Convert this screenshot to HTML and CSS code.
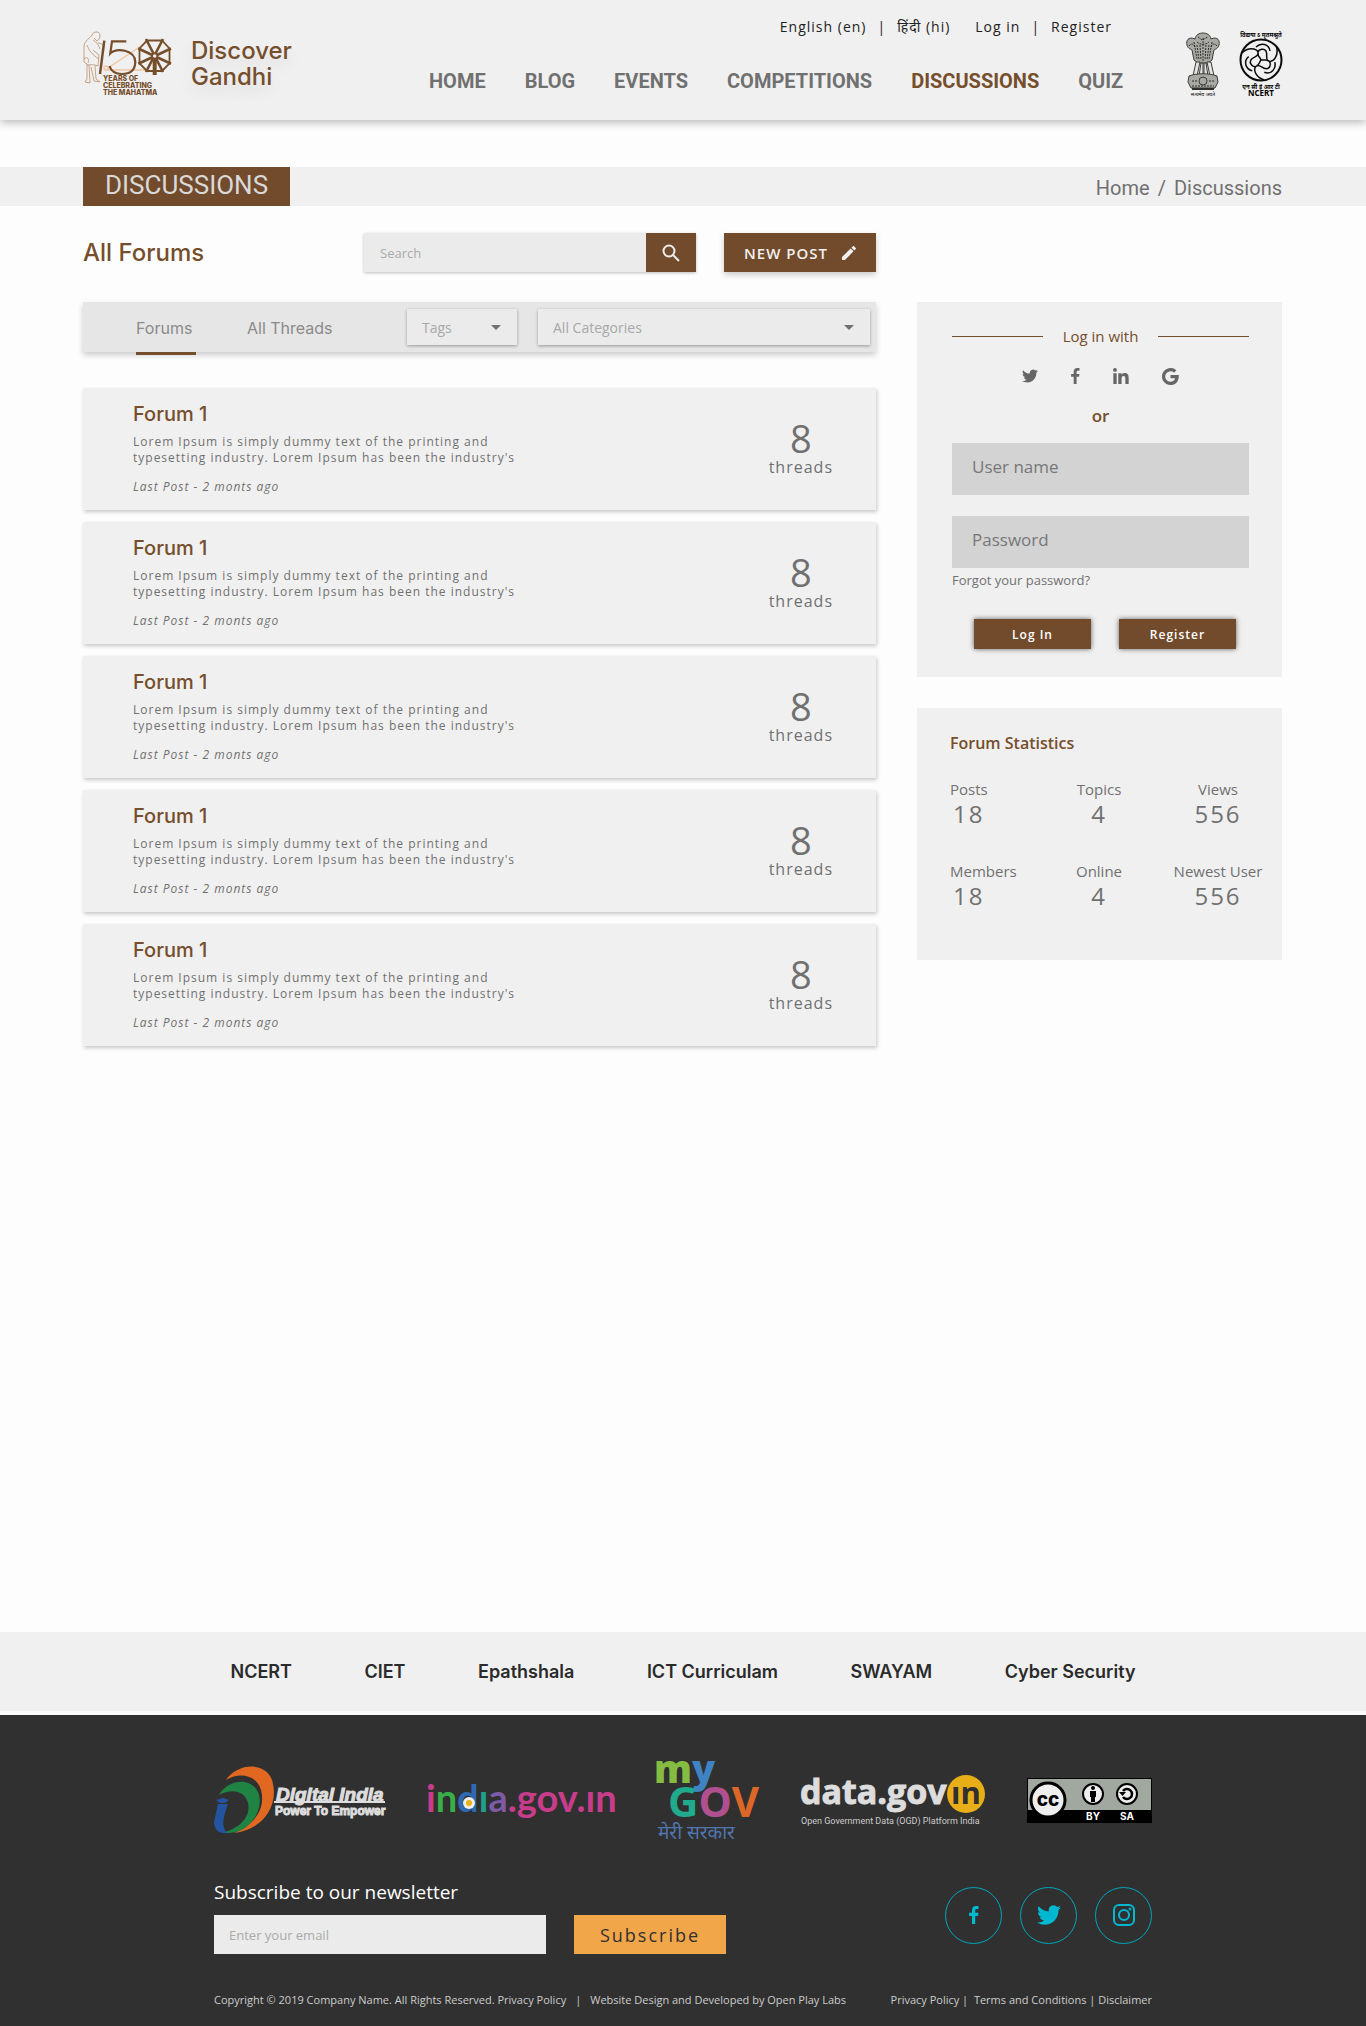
FILE: index.html
```html
<!DOCTYPE html>
<html lang="en">
<head>
<meta charset="utf-8">
<title>Discussions - Discover Gandhi</title>
<meta name="viewport" content="width=device-width, initial-scale=1">
<link rel="stylesheet" href="styles.css">
</head>
<body>
<svg class="sprite" aria-hidden="true">
  <symbol id="twitter" viewBox="0 0 24 24"><path d="M24 4.600a10 10 0 0 1-2.800.8 5 5 0 0 0 2.100-2.700 10 10 0 0 1-3.100 1.200 4.900 4.900 0 0 0-8.400 4.500A14 14 0 0 1 1.700 3.200a4.900 4.900 0 0 0 1.500 6.500 4.900 4.900 0 0 1-2.200-.6v.1a4.900 4.900 0 0 0 3.900 4.800 5 5 0 0 1-2.200.1 4.900 4.900 0 0 0 4.600 3.400A9.900 9.900 0 0 1 0 19.500a14 14 0 0 0 7.500 2.200c9.100 0 14-7.500 14-14v-.6A10 10 0 0 0 24 4.600z"/></symbol>
  <symbol id="facebook" viewBox="0 0 12 22"><path d="M11.500.2v3.500H9.400c-1.600 0-1.900.8-1.900 1.900v2.500h3.900l-.5 4H7.500V22h-4V12.100H0v-4h3.500v-3C3.500 1.800 5.500 0 8.500 0c1.400 0 2.600.1 3 .2z"/></symbol>
  <symbol id="linkedin" viewBox="0 0 24 24"><path d="M5.500 24H.5V8h5zM3 5.800A2.900 2.900 0 1 1 3 0a2.900 2.900 0 0 1 0 5.800zM23.500 24h-5v-7.800c0-1.900 0-4.200-2.600-4.200s-3 2-3 4.100V24h-5V8h4.800v2.200c.7-1.300 2.300-2.600 4.700-2.600 5.100 0 6.100 3.300 6.100 7.700z"/></symbol>
  <symbol id="google" viewBox="0 0 24 24"><path d="M12 10v4.400h6.500c-.7 3-3.200 5-6.500 5A7.400 7.400 0 1 1 17 6.600l3.300-3.300A12 12 0 1 0 12 24c7 0 12-4.900 11.700-14z"/></symbol>
</svg>

<header class="topbar">
  <div class="container topbar-row">
    <a class="brand" href="#">
      <svg class="brand-mark" viewBox="0 0 90 66" role="img" aria-label="150 years of celebrating the Mahatma">
        <g fill="none" stroke="#b98f6c" stroke-width=".8">
          <path d="M9 4c1-4 8-4 8 0 0 3-1 5-3 6l-3-3M9 4c-1 3-8 5-8 12v15l3 2v15l-2 3 5 1-1-18M10 9c4 2 6 6 7 9M4 14c2 5 4 9 12 14M15 12c3 0 5 2 6 4M10 19l6 5-1 11c-4-2-9-1-11-1M12 35l1 13 4 3-6-1-3-14M1 28c3-3 6 0 4 4"/>
        </g>
        <g fill="none" stroke="#f0c5a0" stroke-width="1.500"><path d="M25 37 64 11M24 39h40"/><circle cx="23" cy="37" r="2"/></g>
        <g fill="none" stroke="#754e2c">
          <path stroke-width="2.500" d="M21.300 9.700 17 43"/>
          <path stroke-width="2.200" d="M43.300 10.300H29L27.300 22.300C33 16 52 19 52.300 31 52 40 46 43 39 43 32 43 28 40 26.500 35"/>
          <path stroke-width="1.800" d="M64 9.500h15l7.500 8v15l-7.500 7.500H64l-7.500-7.500v-15z"/>
          <path stroke-width="2.600" d="M63 8 80 41M80 8 63 41M88 17.500 55.300 32.800M88 32.800 55.300 17.500"/>
          <path stroke-width="4" d="M71.700 28v16"/>
        </g>
        <circle cx="71.700" cy="25" r="2.500" fill="#f0f0f0" stroke="#754e2c" stroke-width="1.500"/>
        <g class="brand-caption"><text x="20" y="50">YEARS OF</text><text x="20" y="57">CELEBRATING</text><text x="20" y="64">THE MAHATMA</text></g>
      </svg>
      <span class="brand-name">Discover<br>Gandhi</span>
    </a>
    <div class="nav-col">
      <div class="utility"><a href="#">English (en)</a><span>|</span><a href="#">हिंदी (hi)</a><a class="login-link" href="#">Log in</a><span>|</span><a href="#">Register</a></div>
      <nav class="main-nav" aria-label="Main"><a href="#">HOME</a><a href="#">BLOG</a><a href="#">EVENTS</a><a href="#">COMPETITIONS</a><a class="current" href="#">DISCUSSIONS</a><a href="#">QUIZ</a></nav>
    </div>
    <div class="emblems">
      <svg width="36" height="64" viewBox="0 0 34 64" role="img" aria-label="National emblem of India">
        <g fill="#a8a8a5" stroke="#3a3a38" stroke-width="1">
          <path d="M9 6c1-8 15-8 16 0 7-3 9 2 8 6-1 4-4 4-5 5l-2 10-4 3H12l-4-3-2-10c-1-1-4-1-5-5C0 8 2 3 9 6z"/>
          <path fill="#e4e4e2" d="M10 29h4l-3 14H7zM15 30h2v13h-4zM18 30h2l2 13h-4zM21 29h4l3 14h-4z"/>
          <path d="M3 43c8-3 20-3 28 0l1 6-3 6H5l-3-6z"/><circle cx="17" cy="48" r="4"/>
        </g>
        <path fill="none" stroke="#2d2d2b" stroke-width="1" stroke-dasharray="2 1" d="M12 4l4 3 6-3M11 9c3 3 9 3 12 0M11 12l2 15M14 12l1 15M17 5v23M20 12l-1 15M23 12l-2 15M8 9l3 17M26 9l-3 17M3 13c3-4 6-1 6 2M31 13c-3-4-6-1-6 2M6 48h5M23 48h5M6 53h22"/>
        <path stroke="#2d2d2b" stroke-width="2" d="M6 56h22"/>
        <text class="micro" x="17" y="63" text-anchor="middle">सत्यमेव जयते</text>
      </svg>
      <svg width="43" height="64" viewBox="0 0 43 64" role="img" aria-label="NCERT">
        <text class="micro strong" x="22" y="4" text-anchor="middle">विद्यया ऽ मृतमश्नुते</text>
        <g fill="none" stroke="#0b0b0b" stroke-width="1.500">
          <circle cx="22" cy="27" r="20.500" stroke-width="2"/>
          <g id="swan"><path d="M22 27c-1-3-4-4-3-8 1-3 6-4 8-1 2 4-1 7 2 10"/><path d="M3 20c6-6 14-5 16-1M17 14c5-5 13-3 14 4"/></g>
          <use href="#swan" transform="rotate(120 22 27)"/><use href="#swan" transform="rotate(240 22 27)"/>
        </g>
        <text class="micro strong" x="22" y="56" text-anchor="middle">एन सी ई आर टी</text>
        <text class="ncert" x="22" y="63" text-anchor="middle">NCERT</text>
      </svg>
    </div>
  </div>
</header>

<div class="titlebar"><div class="container titlebar-row"><h1>DISCUSSIONS</h1><nav class="crumbs" aria-label="Breadcrumb"><a href="#">Home</a><span>/</span><a href="#">Discussions</a></nav></div></div>

<main class="container layout">
  <section class="forums">
    <div class="tools">
      <h2>All Forums</h2>
      <form class="search"><input type="search" placeholder="Search" aria-label="Search"><button type="button" aria-label="Search"><svg width="18" height="18" viewBox="0 0 18 18" fill="none" stroke="#eee" stroke-width="2"><circle cx="7" cy="7" r="5.500"/><path d="M11 11l6 6"/></svg></button></form>
      <button class="new-post" type="button">NEW POST<svg width="14" height="14" viewBox="0 0 18 18" fill="#f0f0f0"><path d="M0 14.200V18h3.800L14.800 6.900 11.100 3.200zM17.700 4a1 1 0 0 0 0-1.400L15.400.3a1 1 0 0 0-1.400 0l-1.800 1.800 3.700 3.700z"/></svg></button>
    </div>
    <div class="filters">
      <a class="tab active" href="#">Forums</a><a class="tab" href="#">All Threads</a>
      <select class="tags" aria-label="Tags"><option>Tags</option></select>
      <select class="categories" aria-label="Categories"><option>All Categories</option></select>
    </div>
    <div class="list">
      <article class="card"><div><h3>Forum 1</h3><p>Lorem Ipsum is simply dummy text of the printing and<br>typesetting industry. Lorem Ipsum has been the industry's</p><p class="last">Last Post - 2 monts ago</p></div><div class="count"><strong>8</strong><span>threads</span></div></article>
      <article class="card"><div><h3>Forum 1</h3><p>Lorem Ipsum is simply dummy text of the printing and<br>typesetting industry. Lorem Ipsum has been the industry's</p><p class="last">Last Post - 2 monts ago</p></div><div class="count"><strong>8</strong><span>threads</span></div></article>
      <article class="card"><div><h3>Forum 1</h3><p>Lorem Ipsum is simply dummy text of the printing and<br>typesetting industry. Lorem Ipsum has been the industry's</p><p class="last">Last Post - 2 monts ago</p></div><div class="count"><strong>8</strong><span>threads</span></div></article>
      <article class="card"><div><h3>Forum 1</h3><p>Lorem Ipsum is simply dummy text of the printing and<br>typesetting industry. Lorem Ipsum has been the industry's</p><p class="last">Last Post - 2 monts ago</p></div><div class="count"><strong>8</strong><span>threads</span></div></article>
      <article class="card"><div><h3>Forum 1</h3><p>Lorem Ipsum is simply dummy text of the printing and<br>typesetting industry. Lorem Ipsum has been the industry's</p><p class="last">Last Post - 2 monts ago</p></div><div class="count"><strong>8</strong><span>threads</span></div></article>
    </div>
  </section>
  <aside class="side">
    <form class="panel login">
      <div class="with">Log in with</div>
      <div class="social">
        <a href="#" aria-label="Twitter"><svg width="16" height="16"><use href="#twitter"/></svg></a>
        <a href="#" aria-label="Facebook"><svg width="9" height="16"><use href="#facebook"/></svg></a>
        <a href="#" aria-label="LinkedIn"><svg width="16" height="16"><use href="#linkedin"/></svg></a>
        <a href="#" aria-label="Google"><svg width="17" height="17"><use href="#google"/></svg></a>
      </div>
      <div class="or">or</div>
      <input type="text" placeholder="User name" aria-label="User name">
      <input type="password" placeholder="Password" aria-label="Password">
      <a class="forgot" href="#">Forgot your password?</a>
      <div class="actions"><button type="button">Log In</button><button type="button">Register</button></div>
    </form>
    <section class="panel stats">
      <h2>Forum Statistics</h2>
      <dl>
        <div><dt>Posts</dt><dd>18</dd></div><div><dt>Topics</dt><dd>4</dd></div><div><dt>Views</dt><dd>556</dd></div>
        <div><dt>Members</dt><dd>18</dd></div><div><dt>Online</dt><dd>4</dd></div><div><dt>Newest User</dt><dd>556</dd></div>
      </dl>
    </section>
  </aside>
</main>

<nav class="links" aria-label="Related sites"><div class="links-row"><a href="#">NCERT</a><a href="#">CIET</a><a href="#">Epathshala</a><a href="#">ICT Curriculam</a><a href="#">SWAYAM</a><a href="#">Cyber Security</a></div></nav>

<footer class="footer">
  <div class="footer-inner">
    <div class="partners">
      <svg width="172" height="68" viewBox="0 0 172 68" role="img" aria-label="Digital India">
        <path fill="#e06820" d="M12 14C24-4 52-4 58 14c8 26-10 50-38 53 20-8 32-24 27-43C43 10 27 5 12 14z"/>
        <path fill="#1f8443" d="M5 29c8-15 31-19 39-3 7 17-8 41-29 41H8c19-5 29-17 26-30C31 25 18 22 5 29z"/>
        <path fill="#24539f" d="M4 38h10C9 52 7 60 13 67 4 68 0 63 0 56z"/><path fill="#24539f" d="M2 34l4-1a4 3 0 0 1 6 0l3 1-4 3H6z"/>
        <path stroke="#ddd" stroke-width="2" d="M60 36h111"/>
        <text class="di-title" x="62" y="35">Digital India</text><text class="di-sub" x="61" y="49">Power To Empower</text>
      </svg>
      <svg width="190" height="48" viewBox="0 0 190 48" role="img" aria-label="india.gov.in">
        <text class="india" y="36"><tspan fill="#c83c8c">i</tspan><tspan fill="#3aae49">n</tspan><tspan fill="#2f69b1">d</tspan><tspan fill="#20a08a">ı</tspan><tspan fill="#7d5aa6">a</tspan><tspan fill="#c83c8c">.gov.ın</tspan></text>
        <circle cx="43" cy="27" r="6" fill="#eee"/><circle cx="43" cy="27" r="3" fill="#e9b010"/>
      </svg>
      <svg width="106" height="82" viewBox="0 0 106 82" role="img" aria-label="myGov">
        <text class="my" x="-2" y="24"><tspan fill="#84bb41">m</tspan><tspan fill="#3f83c3">y</tspan></text>
        <text class="gov" x="12" y="58"><tspan fill="#20ab8d">G</tspan><tspan fill="#b0508f">O</tspan><tspan fill="#dd6727">V</tspan></text>
        <text class="hindi" x="2" y="80">मेरी सरकार</text>
      </svg>
      <svg width="186" height="54" viewBox="0 0 186 54" role="img" aria-label="data.gov.in">
        <circle cx="165" cy="21" r="19" fill="#e7ae18"/>
        <text class="data" x="-1" y="31">data.gov</text><text class="data-in" x="150" y="31">ın</text>
        <text class="ogd" x="0" y="51">Open Government Data (OGD) Platform India</text>
      </svg>
      <svg width="125" height="45" viewBox="0 0 125 45" role="img" aria-label="Creative Commons BY SA">
        <path fill="#000" d="M0 0h125v45H0z"/><path fill="#a0a89f" d="M1 1h123v31H1z"/>
        <circle cx="21" cy="22" r="17" fill="#eee" stroke="#000" stroke-width="3"/><text class="cc" x="21" y="28" text-anchor="middle">cc</text>
        <g fill="#eee" stroke="#000" stroke-width="2"><circle cx="66" cy="16" r="10"/><circle cx="100" cy="16" r="10"/></g>
        <circle cx="66" cy="10" r="2"/><path d="M63 13h6v6h-1v5h-4v-5h-1z"/><path fill="none" stroke="#000" stroke-width="2.500" d="M96 13a5 5 0 1 1 0 6"/><path d="M92 14h7l-3.500 4z"/>
        <text class="bysa" x="66" y="42" text-anchor="middle">BY</text><text class="bysa" x="100" y="42" text-anchor="middle">SA</text>
      </svg>
    </div>
    <div class="newsletter">
      <form><label for="email">Subscribe to our newsletter</label><div class="subscribe"><input id="email" type="email" placeholder="Enter your email"><button type="button">Subscribe</button></div></form>
      <div class="rings">
        <a href="#" aria-label="Facebook"><svg width="10" height="18"><use href="#facebook"/></svg></a>
        <a href="#" aria-label="Twitter"><svg width="24" height="24"><use href="#twitter"/></svg></a>
        <a href="#" aria-label="Instagram"><svg width="24" height="24" viewBox="0 0 24 24" class="line"><rect x="2" y="2" width="20" height="20" rx="5"/><circle cx="12" cy="12" r="5"/><circle cx="18" cy="6" r=".5"/></svg></a>
      </div>
    </div>
    <div class="legal"><p>Copyright © 2019 Company Name. All Rights Reserved. Privacy Policy<span class="bar">|</span>Website Design and Developed by Open Play Labs</p><p><a href="#">Privacy Policy</a> |&nbsp; <a href="#">Terms and Conditions</a> | <a href="#">Disclaimer</a></p></div>
  </div>
</footer>
</body>
</html>
```
FILE: styles.css
```css
* { box-sizing: border-box; }
body { margin: 0; min-height: 100vh; display: flex; flex-direction: column; background: #fdfdfd; color: #707070; font: 14px/20px "Open Sans", "Noto Sans", sans-serif; }
a { color: inherit; text-decoration: none; }
h1, h2, h3, p, dl, dd { margin: 0; }
button, input, select { font-family: inherit; border: 0; border-radius: 0; margin: 0; }
button { cursor: pointer; }
.sprite { position: absolute; width: 0; height: 0; }
.container { width: 100%; padding: 0 84px 0 83px; }

.topbar { background: #f0f0f0; box-shadow: 0 3px 8px rgba(0,0,0,.25); }
.topbar-row { display: flex; height: 120px; align-items: flex-start; }
.brand { display: flex; gap: 18px; padding-top: 31px; width: 346px; }
.brand-mark { width: 90px; height: 66px; overflow: visible; }
.brand-caption { fill: #754e2c; font: 800 7px "Inter", sans-serif; }
.brand-name { padding-top: 7px; color: #754e2c; font: 500 24px/26px "Inter", sans-serif; text-shadow: 0 8px 16px rgba(0,0,0,.1); }
.nav-col { flex: 1; display: flex; flex-direction: column; gap: 32px; padding-top: 17px; }
.utility { display: flex; justify-content: flex-end; gap: 11px; padding-right: 73px; color: #222; font-size: 14px; letter-spacing: 1px; white-space: nowrap; }
.login-link { margin-left: 14px; }
.main-nav { display: flex; gap: 39px; font: bold 20px/24px "Roboto", sans-serif; }
.main-nav .current { color: #754e2c; }
.emblems { display: flex; gap: 18px; padding-top: 33px; }
.emblems svg { overflow: visible; }
.micro { font: 5px "Noto Sans", sans-serif; }
.strong { font-weight: bold; font-size: 6px; }
.ncert { font: bold 8px "Open Sans", sans-serif; }

.titlebar { margin-top: 47px; background: #f0f0f0; }
.titlebar-row { display: flex; justify-content: space-between; height: 39px; }
h1 { width: 207px; text-align: center; background: #724b2c; color: #d9d9d9; font: 400 26px/37px "Roboto", sans-serif; }
.crumbs { display: flex; gap: 8px; font: 20px/42px "Roboto", sans-serif; }

.layout { display: grid; grid-template-columns: minmax(0, 1fr) 365px; gap: 41px; padding-top: 27px; align-items: start; }
.tools { display: flex; height: 39px; align-items: center; }
.tools h2 { width: 281px; color: #754e2c; font: 500 24px/36px "Inter", sans-serif; }
.search { display: flex; flex: 1; height: 39px; margin-right: 28px; box-shadow: 0 1px 3px rgba(0,0,0,.25); }
.search input { flex: 1; min-width: 0; padding: 0 16px; background: #ebebeb; font-size: 13px; }
::placeholder { color: #aaa; opacity: 1; }
.search button { display: grid; place-items: center; width: 50px; background: #724b2c; }
.new-post { display: flex; align-items: center; justify-content: center; gap: 14px; width: 152px; height: 39px; background: #724b2c; color: #f0f0f0; font-size: 15px; font-weight: 600; letter-spacing: 1px; white-space: nowrap; padding: 0; box-shadow: 0 3px 6px rgba(0,0,0,.2); }
.filters { display: flex; align-items: center; height: 50px; margin-top: 30px; padding: 0 6px 0 53px; background: #e6e6e6; box-shadow: 0 3px 6px rgba(0,0,0,.2); }
.tab { align-self: stretch; height: 53px; color: #8a8a8a; font: 16px/52px "Inter", sans-serif; white-space: nowrap; }
.tab.active { width: 60px; margin-right: 51px; border-bottom: 3px solid #754e2c; }
select { appearance: none; height: 36px; padding: 0 15px; color: #a8a8a8; font-size: 14px; box-shadow: 0 1px 3px rgba(0,0,0,.35); background: #ebebeb url("data:image/svg+xml,%3Csvg xmlns='http://www.w3.org/2000/svg' width='10' height='5'%3E%3Cpath fill='%23707070' d='M0 0h10L5 5z'/%3E%3C/svg%3E") no-repeat right 16px center; }
.tags { width: 110px; margin: 0 21px 0 auto; }
.categories { width: 332px; }
.list { display: grid; gap: 12px; margin-top: 36px; }
.card { display: flex; justify-content: space-between; height: 122px; padding: 10px 43px 0 50px; background: #f0f0f0; box-shadow: 1px 2px 4px rgba(0,0,0,.22); }
.card h3 { color: #754e2c; font: 500 20px/32px "Inter", sans-serif; }
.card p { padding-top: 4px; font-size: 12px; line-height: 16px; letter-spacing: 1px; }
.card .last { padding-top: 13px; font-style: italic; }
.count { display: flex; flex-direction: column; align-items: center; padding-top: 20px; letter-spacing: 1px; }
.count strong { font-size: 38px; line-height: 40px; font-weight: 400; letter-spacing: 0; }
.count span { font-size: 16px; line-height: 18px; }

.side { display: grid; gap: 31px; padding-top: 69px; }
.panel { background: #f0f0f0; }
.login { display: flex; flex-direction: column; height: 375px; padding: 24px 33px 0 35px; }
.with { display: flex; align-items: center; gap: 20px; color: #754e2c; font-size: 15px; }
.with::before, .with::after { content: ""; flex: 1; height: 1px; background: #754e2c; }
.social { display: flex; justify-content: center; align-items: center; gap: 33px; height: 18px; margin-top: 21px; fill: #666; }
.social a, .rings a { display: grid; place-items: center; }
.or { margin: 21px 0 17px; text-align: center; color: #754e2c; font-size: 17px; font-weight: 600; }
.login input { height: 52px; padding: 0 20px 5px; background: #d3d3d3; font-size: 17px; }
.login input::placeholder { color: #777; }
.login input + input { margin-top: 21px; }
.forgot { padding-top: 2px; font-size: 13px; }
.actions { display: flex; justify-content: space-between; margin: 29px 13px 0 22px; }
.actions button { width: 117px; height: 30px; background: #724b2c; color: #fff; font-size: 12px; font-weight: 600; letter-spacing: 1px; box-shadow: 0 0 5px rgba(0,0,0,.6); }
.stats { height: 252px; padding: 25px 18px 0 33px; }
.stats h2 { color: #754e2c; font-size: 16px; line-height: 20px; font-weight: 600; }
.stats dl { display: grid; grid-template-columns: 76px 1fr 92px; row-gap: 32px; padding-top: 26px; text-align: center; white-space: nowrap; }
.stats dl > div:nth-child(3n+1) dt { text-align: left; }
.stats dl > div:nth-child(3n+1) dd { text-align: left; padding-left: 3px; }
.stats dt { font-size: 15px; }
.stats dd { font-size: 24px; line-height: 30px; letter-spacing: 2px; }

.links { margin-top: auto; background: #f0f0f0; border-bottom: 4px solid #fafafa; }
.links-row { display: flex; justify-content: space-between; max-width: 905px; margin: 0 auto; color: #2b2b2b; font: 600 18px/79px "Inter", sans-serif; }
.footer { background: #303030; color: #ccc; }
.footer-inner { width: 938px; max-width: 100%; margin: 0 auto; height: 311px; padding-top: 44px; }
.partners { display: flex; justify-content: space-between; align-items: center; height: 82px; }
.partners svg { overflow: visible; }
.di-title { font: italic bold 19px "Liberation Sans", sans-serif; fill: #ddd; stroke: #ddd; stroke-width: 1px; }
.di-sub { font: bold 12px "Liberation Sans", sans-serif; fill: #ddd; stroke: #ddd; stroke-width: 1px; }
.india { font: bold 38px "Lato", sans-serif; }
.my { font: 800 38px "Open Sans", sans-serif; }
.gov { font: bold 42px "Open Sans", sans-serif; }
.hindi { font: 19px "Noto Sans", sans-serif; fill: #5076ad; }
.data { font: bold 34px "Open Sans", sans-serif; fill: #ddd; stroke: #ddd; stroke-width: 1px; }
.data-in { font: bold 31px "Open Sans", sans-serif; fill: #303030; }
.ogd { font: 9px "Roboto", sans-serif; fill: #ccc; }
.cc { font: 800 19px "Inter", sans-serif; }
.bysa { font: bold 10px "Inter", sans-serif; fill: #fff; }
.newsletter { display: flex; justify-content: space-between; align-items: center; padding-top: 39px; }
.newsletter label { display: block; color: #fff; font-size: 19px; line-height: 24px; }
.subscribe { display: flex; gap: 28px; margin-top: 11px; }
.subscribe input { width: 332px; height: 39px; padding: 0 15px; background: #ebebeb; font-size: 13px; }
.subscribe button { width: 152px; height: 39px; background: #f2a64a; color: #303030; font-size: 18px; letter-spacing: 2px; }
.rings { display: flex; gap: 18px; padding-bottom: 4px; fill: #00b8d0; }
.rings a { width: 57px; height: 57px; border: 1px solid #00a6bc; border-radius: 50%; }
.line { fill: none; stroke: #00b8d0; stroke-width: 2; }
.legal { display: flex; justify-content: space-between; padding-top: 36px; font-size: 11px; white-space: nowrap; }
.bar { margin: 0 9px; }
```
